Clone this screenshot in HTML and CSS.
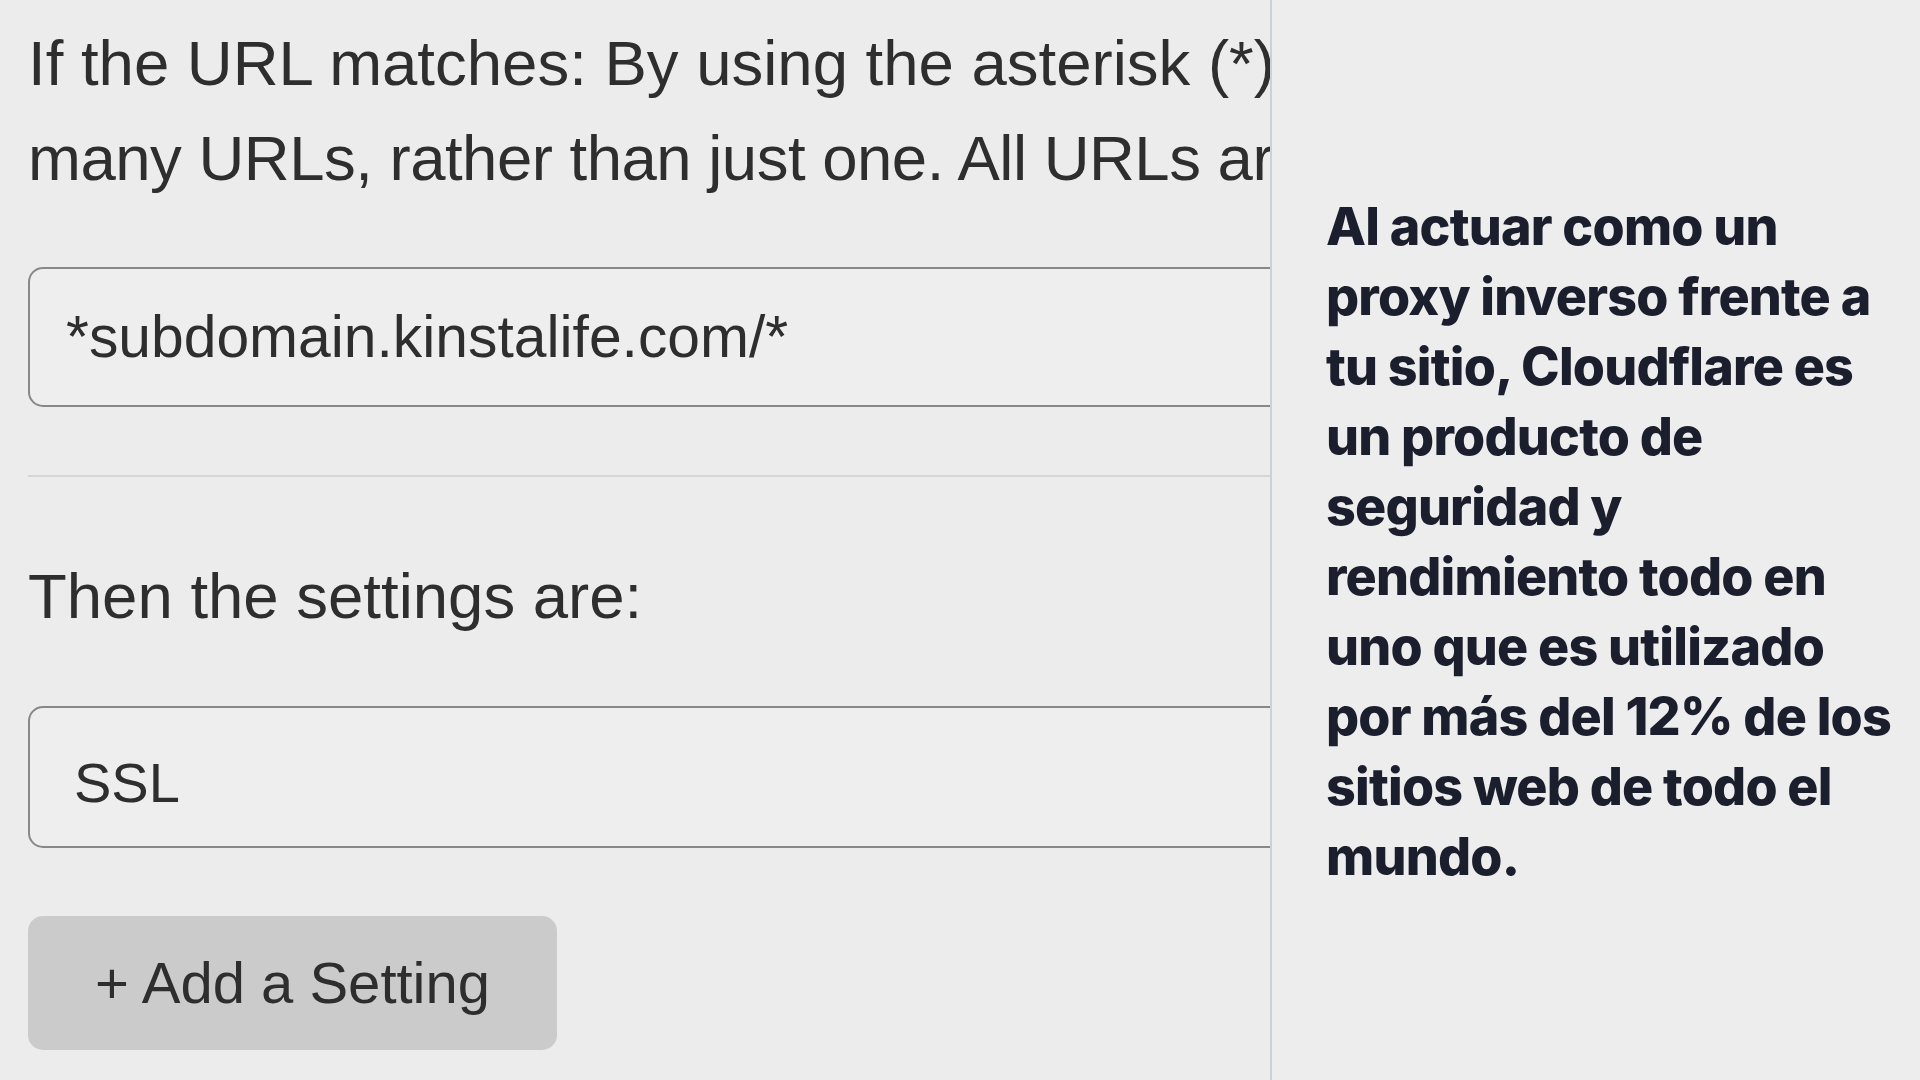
FILE: index.html
```html
<!DOCTYPE html>
<html lang="es">
<head>
<meta charset="utf-8">
<title>Page Rules</title>
<link rel="stylesheet" href="styles.css">
</head>
<body>
<div class="page">
  <section class="rules">
    <div class="rules-inner">
      <p class="intro"><span class="line">If the URL matches: By using the asterisk (*) character, you can create dynamic patterns that can match</span><span class="line line-tight">many URLs, rather than just one. All URLs are case insensitive.</span></p>
      <div class="field field-url">*subdomain.kinstalife.com/*</div>
      <hr class="divider">
      <p class="label">Then the settings are:</p>
      <div class="field field-setting">SSL</div>
      <button class="add-btn" type="button">+ Add a Setting</button>
    </div>
  </section>
  <aside class="caption">
    <p class="caption-text">Al actuar como un<br>proxy inverso frente a<br>tu sitio, Cloudflare es<br>un producto de<br>seguridad y<br>rendimiento todo en<br>uno que es utilizado<br>por más del 12% de los<br>sitios web de todo el<br>mundo.</p>
  </aside>
</div>
</body>
</html>
```

FILE: styles.css
```css
* { box-sizing: border-box; }
html, body { margin: 0; padding: 0; }
body {
  width: 1920px;
  height: 1080px;
  background: #ececec;
  overflow: hidden;
}
.page {
  display: flex;
  width: 1920px;
  height: 1080px;
}
.rules {
  width: 1270px;
  flex-shrink: 0;
  overflow: hidden;
  height: 1080px;
}
.rules-inner {
  width: 1700px;
  padding-left: 28px;
  display: flex;
  flex-direction: column;
  align-items: flex-start;
  font-family: "Liberation Sans", Arial, sans-serif;
  color: #2e2e2e;
}
.intro {
  margin: 16px 0 0 0;
  font-size: 63.5px;
  line-height: 95px;
  white-space: nowrap;
}
.intro .line { display: block; }
.intro .line-tight { letter-spacing: -0.5px; }
.field {
  width: 1600px;
  border: 2px solid #888888;
  border-radius: 15px;
  background: #eeeeee;
  white-space: nowrap;
}
.field-url {
  margin-top: 61px;
  height: 140px;
  font-size: 58.8px;
  line-height: 136px;
  padding-left: 36px;
}
.divider {
  margin: 68px 0 0 0;
  width: 1600px;
  height: 2px;
  border: 0;
  background: #d6d6d6;
}
.label {
  margin: 72px 0 0 0;
  font-size: 63.5px;
  line-height: 95px;
  white-space: nowrap;
}
.field-setting {
  margin-top: 62px;
  height: 142px;
  padding-top: 12px;
  font-size: 56px;
  line-height: 126px;
  padding-left: 44px;
}
.add-btn {
  margin-top: 68px;
  width: 529px;
  height: 134px;
  border: 0;
  border-radius: 15px;
  background: #cbcbcb;
  color: #2e2e2e;
  font-family: "Liberation Sans", Arial, sans-serif;
  font-size: 58px;
  line-height: 134px;
  padding: 0;
  text-align: center;
}
.caption {
  flex: 1;
  border-left: 2px solid #cad0dc;
  display: flex;
  flex-direction: column;
  justify-content: center;
  padding-left: 54px;
  background: #ededed;
}
.caption-text {
  margin: 0;
  padding-top: 3px;
  font-family: Inter, "Noto Sans", sans-serif;
  font-weight: 800;
  font-size: 52px;
  line-height: 70px;
  color: #1b1e2c;
  letter-spacing: -0.8px;
  white-space: nowrap;
}
```
